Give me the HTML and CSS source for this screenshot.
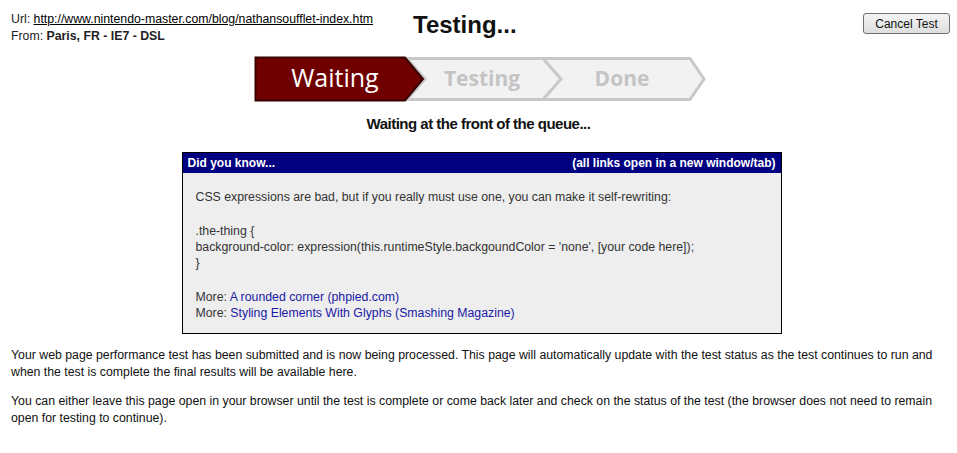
FILE: index.html
```html
<!DOCTYPE html>
<html lang="en">
<head>
  <meta charset="UTF-8">
  <title>Test Status</title>
  <link rel="stylesheet" href="styles.css">
</head>
<body>
  <div class="header">
    <div class="test-info">
      <div>Url: <a href="#" class="plain-link">http://www.nintendo-master.com/blog/nathansoufflet-index.htm</a></div>
      <div>From: <b>Paris, FR - IE7 - DSL</b></div>
    </div>
    <h1 class="title">Testing...</h1>
    <button class="cancel-button">Cancel Test</button>
  </div>

  <!-- Barre de progression -->
  <div class="progress">
    <svg width="452" height="46" viewBox="0 0 452 46">
      <polygon points="153,2.5 304,2.5 322,23 304,43.5 153,43.5 171,23" fill="#f2f2f2" stroke="#c8c8c8" stroke-width="3"/>
      <polygon points="289,2.5 436,2.5 450,23 436,43.5 289,43.5 307,23" fill="#f2f2f2" stroke="#c8c8c8" stroke-width="3"/>
      <polygon points="1.5,1.5 151,1.5 169,23 151,44.5 1.5,44.5" fill="#700000" stroke="#3a0000" stroke-width="2"/>
      <text x="81" y="31" class="step active">Waiting</text>
      <text x="228" y="30" class="step">Testing</text>
      <text x="368" y="30" class="step">Done</text>
    </svg>
  </div>

  <h2 class="status">Waiting at the front of the queue...</h2>

  <div class="tip-box">
    <div class="tip-head">
      <span>Did you know...</span>
      <span>(all links open in a new window/tab)</span>
    </div>
    <div class="tip-body">
      <p>CSS expressions are bad, but if you really must use one, you can make it self-rewriting:</p>
      <p>.the-thing {<br>
      background-color: expression(this.runtimeStyle.backgoundColor = 'none', [your code here]);<br>
      }</p>
      <p>More: <a href="#">A rounded corner (phpied.com)</a><br>
      More: <a href="#">Styling Elements With Glyphs (Smashing Magazine)</a></p>
    </div>
  </div>

  <p class="note">Your web page performance test has been submitted and is now being processed. This page will automatically update with the test status as the test continues to run and when the test is complete the final results will be available here.</p>
  <p class="note">You can either leave this page open in your browser until the test is complete or come back later and check on the status of the test (the browser does not need to remain open for testing to continue).</p>
</body>
</html>
```

FILE: styles.css
```css
body {
  margin: 0;
  padding: 0 11px;
  background: #ffffff;
  color: #222222;
  font-family: 'Liberation Sans', Arial, sans-serif;
  font-size: 12.3px;
}

/* En-tete */
.header {
  display: flex;
  align-items: flex-start;
  padding-top: 11px;
}

.test-info {
  line-height: 17px;
}

.test-info b {
  color: #222222;
}

.plain-link {
  color: #000000;
}

.title {
  margin: 0 0 0 40px;
  font-size: 24px;
  font-weight: bold;
  color: #111111;
  line-height: 28px;
}

.cancel-button {
  margin: 2px -4px 0 auto;
  width: 87px;
  height: 21px;
  padding: 0;
  font-family: 'Liberation Sans', Arial, sans-serif;
  font-size: 12px;
  color: #111111;
  background: linear-gradient(#f4f4f4, #dedede);
  border: 1px solid #707070;
  border-radius: 3px;
}

/* Progression */
.progress {
  display: flex;
  justify-content: center;
  margin-top: 11px;
  padding-left: 3px;
}

.progress svg {
  display: block;
}

.step {
  font-family: 'Open Sans', 'Liberation Sans', sans-serif;
  font-size: 21px;
  font-weight: bold;
  fill: #c4c4c4;
  text-anchor: middle;
}

.step.active {
  font-size: 25px;
  font-weight: normal;
  fill: #ffffff;
}

.status {
  margin: 12px 0 0;
  text-align: center;
  font-size: 15px;
  letter-spacing: -0.5px;
  font-weight: bold;
  color: #111111;
  line-height: 20px;
}

/* Boite d'astuce */
.tip-box {
  width: 598px;
  margin: 18px auto 0;
  border: 1px solid #000000;
  background: #eeeeee;
  position: relative;
  left: 3px;
}

.tip-head {
  display: flex;
  justify-content: space-between;
  align-items: center;
  height: 20px;
  padding: 0 5px;
  background: #000080;
  color: #ffffff;
  font-size: 12px;
  font-weight: bold;
}

.tip-body {
  padding: 16px 13px 12px;
  line-height: 16px;
  color: #333333;
}

.tip-body p {
  margin: 0 0 18px;
}

.tip-body p:last-child {
  margin-bottom: 0;
}

.tip-body a {
  color: #1a1aa6;
  text-decoration: none;
}

.note {
  margin: 13px 0 0;
  line-height: 17px;
  color: #111111;
}

.note + .note {
  margin-top: 12px;
}
```
